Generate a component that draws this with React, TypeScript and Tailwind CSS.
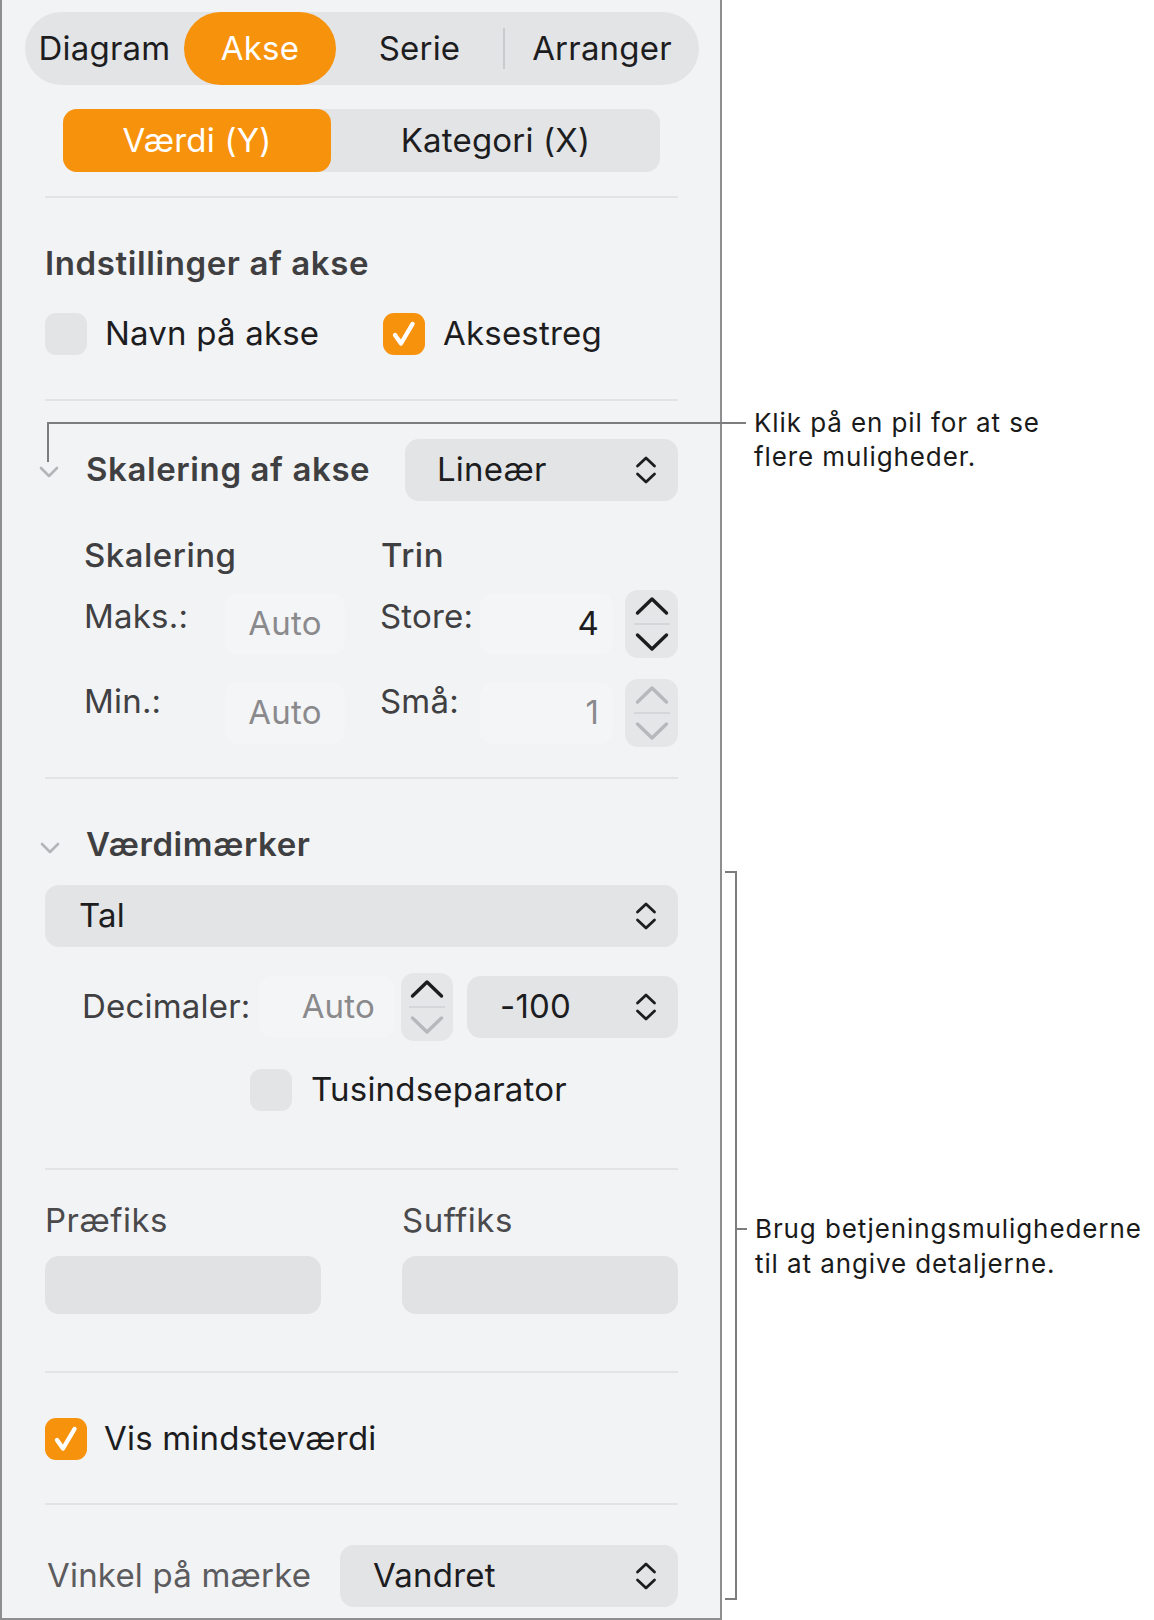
import React from 'react'

function UpDown() {
  return (
    <svg width="22" height="30" viewBox="0 0 22 30" fill="none" stroke="#1d1d1f" strokeWidth="2.8" strokeLinecap="round" strokeLinejoin="round">
      <path d="M2.5 11 L11 3 L19.5 11" />
      <path d="M2.5 19 L11 27 L19.5 19" />
    </svg>
  )
}

function Chevron({ up, color }: { up?: boolean; color: string }) {
  return (
    <svg width="34" height="20" viewBox="0 0 34 20" fill="none" stroke={color} strokeWidth="3.4" strokeLinecap="round" strokeLinejoin="round">
      {up ? <path d="M2.5 17 L17 3 L31.5 17" /> : <path d="M2.5 3 L17 17 L31.5 3" />}
    </svg>
  )
}

function Stepper({ upColor, downColor, className }: { upColor: string; downColor: string; className: string }) {
  return (
    <div className={'flex h-[68px] shrink-0 flex-col items-center justify-center rounded-[13px] bg-[#e5e6e8] ' + className}>
      <Chevron up color={upColor} />
      <div className="my-[7px] h-[2px] w-[36px] bg-[#d5d6d9]" />
      <Chevron color={downColor} />
    </div>
  )
}

function Disclosure() {
  return (
    <svg width="22" height="14" viewBox="0 0 22 14" fill="none" stroke="#b4b5b8" strokeWidth="2.6" strokeLinecap="round" strokeLinejoin="round">
      <path d="M3 3 L11 11 L19 3" />
    </svg>
  )
}

function Checkbox({ checked }: { checked?: boolean }) {
  if (!checked) return <div className="h-[42px] w-[42px] shrink-0 rounded-[11px] bg-[#e3e4e6]" />
  return (
    <div className="flex h-[42px] w-[42px] shrink-0 items-center justify-center rounded-[11px] bg-[#f7920c]">
      <svg width="42" height="42" viewBox="0 0 42 42" fill="none" stroke="white" strokeWidth="4.4" strokeLinecap="round" strokeLinejoin="round">
        <path d="M12 22 L18 30.5 L29.5 11" />
      </svg>
    </div>
  )
}

function Popup({ label, className }: { label: string; className: string }) {
  return (
    <div className={'flex h-[62px] items-center justify-between rounded-[14px] bg-[#e3e4e6] pr-[21px] text-[33px] tracking-[0.2px] text-[#1d1d1f] ' + className}>
      <span>{label}</span>
      <UpDown />
    </div>
  )
}

function Divider({ className }: { className: string }) {
  return <div className={'h-[2px] bg-[#e2e3e5] ' + className} />
}

export default function App() {
  return (
    <div className="relative h-[1620px] w-[1154px] overflow-hidden bg-white font-['Inter',sans-serif]">
      <div className="flex h-[1620px] w-[722px] flex-col border-x-2 border-b-2 border-[#8e8e90] bg-[#f2f3f5] pl-[43px] pr-[42px] text-[33px] tracking-[0.2px]">
        {/* tabs */}
        <div className="-ml-[20px] mt-[12px] flex h-[73px] w-[674px] items-center rounded-full bg-[#e3e4e6] text-[#1d1d1f]">
          <div className="flex w-[159px] justify-center">Diagram</div>
          <div className="flex h-[73px] w-[152px] items-center justify-center rounded-full bg-[#f7920c] text-white">Akse</div>
          <div className="flex w-[167px] justify-center">Serie</div>
          <div className="h-[41px] w-[2px] bg-[#cacbce]" />
          <div className="flex w-[194px] justify-center">Arranger</div>
        </div>

        <div className="ml-[18px] mt-[24px] flex h-[63px] w-[597px] rounded-[14px] bg-[#e3e4e6] text-[#1d1d1f]">
          <div className="flex w-[268px] items-center justify-center rounded-[14px] bg-[#f7920c] text-white">Værdi (Y)</div>
          <div className="flex flex-1 items-center justify-center">Kategori (X)</div>
        </div>

        <Divider className="mt-[24px]" />

        <div className="mt-[46px] flex h-[40px] items-center text-[33px] font-semibold tracking-[0.6px] text-[#3f3f41]">Indstillinger af akse</div>

        <div className="mt-[25px] grid h-[42px] grid-cols-[338px_1fr] items-center text-[#1d1d1f]">
          <div className="flex items-center gap-[18px]">
            <Checkbox />
            <span>Navn på akse</span>
          </div>
          <div className="flex items-center gap-[18px]">
            <Checkbox checked />
            <span>Aksestreg</span>
          </div>
        </div>

        <Divider className="mt-[48px]" />

        <div className="mt-[38px] flex h-[62px] items-center">
          <div className="-ml-[7px] flex w-[22px] pt-[4px]">
            <Disclosure />
          </div>
          <span className="ml-[26px] text-[33px] font-semibold tracking-[0.6px] text-[#3f3f41]">Skalering af akse</span>
          <Popup label="Lineær" className="ml-auto w-[273px] pl-[32px]" />
        </div>

        <div className="mt-[30px] grid h-[40px] grid-cols-[336px_1fr] items-center font-medium tracking-[0.5px] text-[#3f3f41]">
          <span className="pl-[39px]">Skalering</span>
          <span>Trin</span>
        </div>

        <div className="mt-[19px] flex h-[68px] items-center">
          <span className="w-[180px] pb-[14px] pl-[39px] text-[#404042]">Maks.:</span>
          <div className="flex h-[62px] w-[120px] items-center justify-center rounded-[14px] bg-[#f4f5f7] text-[#8a8a8d]">Auto</div>
          <span className="ml-[35px] w-[100px] pb-[14px] text-[#404042]">Store:</span>
          <div className="flex h-[62px] w-[133px] items-center justify-end rounded-[14px] bg-[#f4f5f7] pr-[14px] text-[#1d1d1f]">4</div>
          <Stepper upColor="#1d1d1f" downColor="#1d1d1f" className="ml-[12px] w-[53px]" />
        </div>

        <div className="mt-[21px] flex h-[68px] items-center">
          <span className="w-[180px] pb-[22px] pl-[39px] text-[#404042]">Min.:</span>
          <div className="flex h-[62px] w-[120px] items-center justify-center rounded-[14px] bg-[#f4f5f7] text-[#8a8a8d]">Auto</div>
          <span className="ml-[35px] w-[100px] pb-[22px] text-[#404042]">Små:</span>
          <div className="flex h-[62px] w-[133px] items-center justify-end rounded-[14px] bg-[#f4f5f7] pr-[14px] text-[#8a8a8d]">1</div>
          <Stepper upColor="#b7b8bb" downColor="#b7b8bb" className="ml-[12px] w-[53px]" />
        </div>

        <Divider className="mt-[30px]" />

        <div className="mt-[46px] flex h-[40px] items-center">
          <div className="-ml-[6px] flex w-[22px] pt-[6px]">
            <Disclosure />
          </div>
          <span className="ml-[25px] text-[33px] font-semibold tracking-[0.6px] text-[#3f3f41]">Værdimærker</span>
        </div>

        <Popup label="Tal" className="mt-[20px] pl-[34px]" />

        <div className="mt-[26px] flex h-[67px] items-center">
          <span className="w-[214px] pl-[37px] text-[#404042]">Decimaler:</span>
          <div className="flex h-[62px] w-[136px] items-center justify-end rounded-[14px] bg-[#f4f5f7] pr-[20px] text-[#8a8a8d]">Auto</div>
          <Stepper upColor="#1d1d1f" downColor="#b7b8bb" className="ml-[6px] h-[67px] w-[52px]" />
          <Popup label="-100" className="ml-[14px] flex-1 pl-[33px]" />
        </div>

        <div className="ml-[205px] mt-[29px] flex h-[42px] items-center gap-[19px] text-[#1d1d1f]">
          <Checkbox />
          <span>Tusindseparator</span>
        </div>

        <Divider className="mt-[57px]" />

        <div className="mt-[26px] grid h-[40px] grid-cols-2 items-center gap-x-[81px] tracking-[0.5px] text-[#4a4a4c]">
          <span>Præfiks</span>
          <span>Suffiks</span>
        </div>

        <div className="mt-[20px] grid h-[58px] grid-cols-2 gap-x-[81px]">
          <div className="rounded-[14px] bg-[#e1e2e4]" />
          <div className="rounded-[14px] bg-[#e1e2e4]" />
        </div>

        <Divider className="mt-[57px]" />

        <div className="mt-[45px] flex h-[42px] items-center gap-[17px] text-[#1d1d1f]">
          <Checkbox checked />
          <span>Vis mindsteværdi</span>
        </div>

        <Divider className="mt-[43px]" />

        <div className="mt-[40px] flex h-[62px] items-center">
          <span className="pl-[2px] text-[#5c5c5e]">Vinkel på mærke</span>
          <Popup label="Vandret" className="ml-auto w-[338px] pl-[33px]" />
        </div>
      </div>

      {/* callout: disclosure arrow */}
      <div className="absolute left-[47px] top-[422px] h-[2px] w-[699px] bg-[#7d7d7f]" />
      <div className="absolute left-[47px] top-[422px] h-[40px] w-[2px] bg-[#7d7d7f]" />
      <div className="absolute left-[754px] top-[406px] text-[26px] leading-[34px] tracking-[0.9px] text-[#1a1a1a]">
        <p>Klik på en pil for at se</p>
        <p>flere muligheder.</p>
      </div>

      {/* callout: bracket */}
      <div className="absolute left-[735px] top-[871px] h-[729px] w-[2px] bg-[#7d7d7f]" />
      <div className="absolute left-[725px] top-[871px] h-[2px] w-[12px] bg-[#7d7d7f]" />
      <div className="absolute left-[725px] top-[1598px] h-[2px] w-[12px] bg-[#7d7d7f]" />
      <div className="absolute left-[735px] top-[1228px] h-[2px] w-[12px] bg-[#7d7d7f]" />
      <div className="absolute left-[755px] top-[1211px] text-[26px] leading-[35px] tracking-[0.9px] text-[#1a1a1a]">
        <p>Brug betjeningsmulighederne</p>
        <p>til at angive detaljerne.</p>
      </div>
    </div>
  )
}
